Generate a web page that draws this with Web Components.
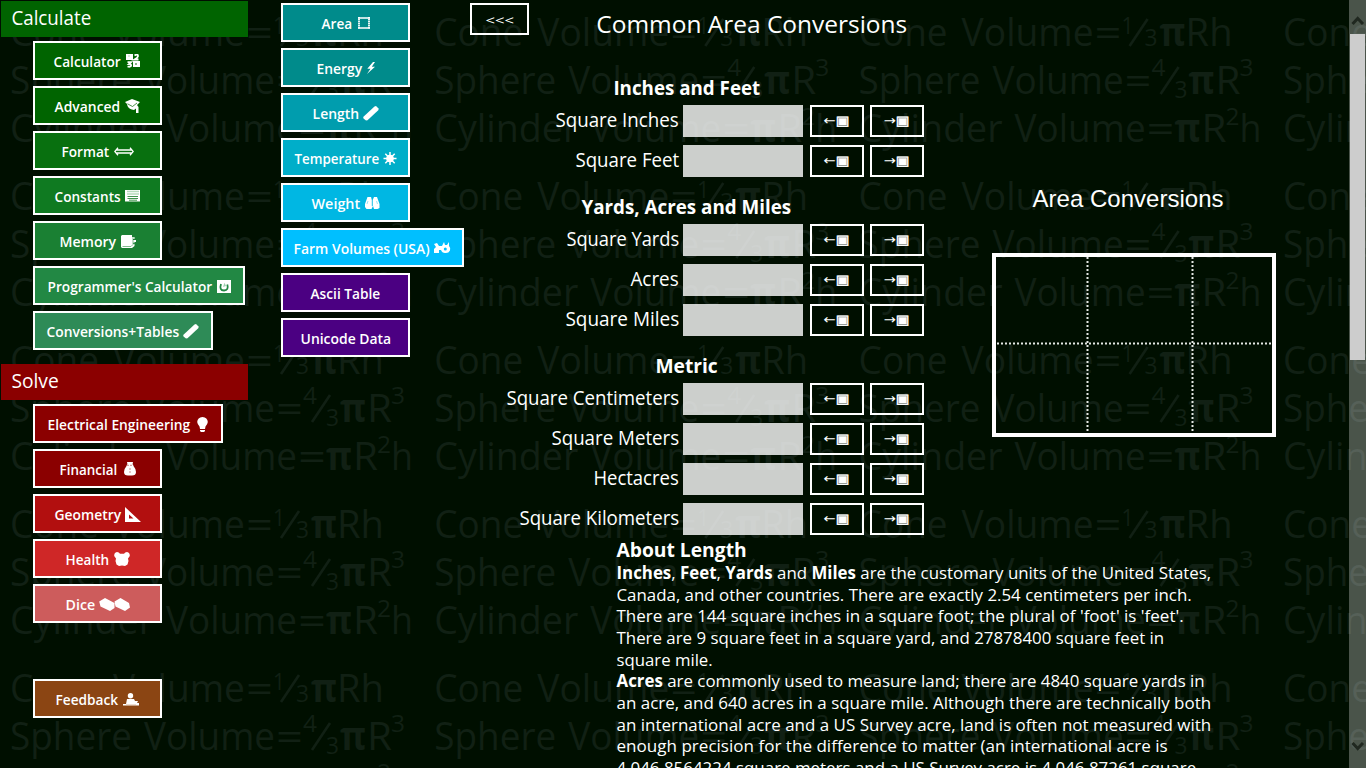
<!DOCTYPE html>
<html lang="en">
<head>
<meta charset="utf-8">
<title>Common Area Conversions</title>
<style>
  html, body { margin: 0; height: 100%; overflow: hidden; background: #000f00; }
  body { font-family: "Open Sans", "Noto Sans", sans-serif; color: #fff; }
</style>
</head>
<body>
<calc-app></calc-app>
<script>
const shadow = (el, html) => { const r = el.attachShadow({ mode: 'open' }); r.innerHTML = html; return r; };

/* One line of text set to an exact width. */
customElements.define('fit-text', class extends HTMLElement {
  connectedCallback() {
    if (this.shadowRoot) return;
    const r = shadow(this, `<style>
      :host{display:block;white-space:nowrap;flex:none}
      span{display:inline-block;transform-origin:0 50%;vertical-align:top}
    </style><span><slot></slot></span>`);
    const w = parseFloat(this.getAttribute('w'));
    this.style.width = w + 'px';
    const s = r.querySelector('span');
    const fs = parseFloat(getComputedStyle(this).fontSize);
    const n = s.offsetWidth ? s.getBoundingClientRect().width : 0;
    if (n) s.style.transform = `translateX(${-0.03 * fs}px) scaleX(${(w + 0.04 * fs) / n})`;
  }
});

/* Repeating formulas behind the page. */
customElements.define('formula-backdrop', class extends HTMLElement {
  connectedCallback() {
    const seg = (x, y, w, t, size = 39, bold = '') =>
      `<text x="${x}" y="${y}" font-size="${size}" ${bold ? 'font-weight="700"' : ''} textLength="${w}" lengthAdjust="spacingAndGlyphs">${t}</text>`;
    const slash = (x, y) => `<path d="M${x} ${y}L${x + 18} ${y - 27}" stroke="#112014" stroke-width="2.6"/>`;
    let out = '';
    for (let r = 0; r < 5; r++) for (let c = 0; c < 4; c++) {
      out += `<g transform="translate(${(c * 424.3).toFixed(1)} ${r * 164})">` +
        seg(10, 46, 89, 'Cone') + seg(113, 46, 132, 'Volume') + seg(246, 46, 27, '=') +
        seg(273, 34, 12, '1', 24) + slash(281, 46) + seg(296, 46, 13, '3', 24) + seg(311, 46, 26, 'π', 39, 1) + seg(337, 46, 47, 'Rh') +
        seg(10, 94, 122, 'Sphere') + seg(144, 94, 131, 'Volume') + seg(276, 94, 27, '=') +
        seg(303, 76, 14, '4', 24) + slash(312, 94) + seg(326, 98, 13, '3', 24) + seg(340, 94, 26, 'π', 39, 1) + seg(367, 94, 25, 'R') + seg(391, 76, 14, '3', 24) +
        seg(10, 142, 144, 'Cylinder') + seg(166, 142, 131, 'Volume') + seg(298, 142, 28, '=') + seg(326, 142, 26, 'π', 39, 1) + seg(353, 142, 25, 'R') + seg(377, 125, 14, '2', 24) + seg(391, 142, 22, 'h') + '</g>';
    }
    shadow(this, `<style>:host{position:absolute;inset:0;overflow:hidden}
      svg{display:block;font-family:"Open Sans","Noto Sans",sans-serif}</style>
      <svg width="1366" height="820" fill="#112014">${out}</svg>`);
  }
});

const ICONS = {
  numbers: [15, 14, '<path d="M0 0H7V6H0zM7 7H14V13H7z"/><path d="M8.500 1.500Q12-.5 12 2Q12 3.500 8.500 5.500H12.500M1.500 8.200H5L3 10Q5.500 10 5 12Q4 13.200 1.500 12.500" fill="none" stroke="#fff" stroke-width="1.800"/><path d="M9 10H11" stroke="#0b6b0b"/><path d="M2 2H4" stroke="#b8d8b8"/>'],
  cap: [15, 15, '<path d="M0 3L7 0L15 3L12 6L13.500 8V14H11V9.500L9 11Q4 10.500 2.500 7L2 5z"/><path d="M2.500 4.800L7.500 7.500L12 4" fill="none" stroke="#006400" stroke-width=".7"/>'],
  arrows: [20, 9, '<path d="M4 .8L.8 4.500L4 8.200M16 .8L19.200 4.500L16 8.200M2.500 3H17.500M2.500 6H17.500" fill="none" stroke="#fff" stroke-width="1.300"/>'],
  list: [15, 12, '<path d="M0 0H15V11.500H0z"/><path d="M2 1.500H14M2 4H14" stroke="#b5dcbc" stroke-width="1.500"/><path d="M2.500 6.500H13M2.500 8.500H13M4 10.200H12" stroke="#0f7a21" stroke-width=".8"/>'],
  book: [15, 13, '<path d="M1 0H11V2H13.500V5H15V7H13.500V11L11 13H1L0 12V1z"/><path d="M1.500 11.500H10L12 9.500V2" fill="none" stroke="#83bb90" stroke-width="1"/><path d="M12 4.500H14M12 8.300H14" stroke="#1a8033"/>'],
  cpu: [14, 13, '<path d="M0 0H14V13H0z"/><path d="M4 4Q2 10.300 7 10.500Q12 10.300 10.300 4.500" fill="none" stroke="#228844" stroke-width="1.800"/><path d="M6 7L7.500 2.800L9 6" fill="#9fd0b0"/>'],
  ruler: [16, 15, '<path d="M11.500 .5L13 0L15.500 2.500V4L4.500 14.200L3 14.500L.5 12.500L.2 11z"/>'],
  bulb: [11, 15, '<path d="M5.500 0Q10.500 .4 10.800 5Q10.500 7.500 8.500 9.500L8 12H3L2.500 9.500Q.5 7.500 .2 5Q.5 .4 5.500 0zM3 13H8V14L7 15H4L3 14z"/>'],
  bag: [12, 14, '<path d="M3 0H9L8.500 2.500H9L9.500 4Q12 7 12 10Q12 13.500 8 13.500H4Q0 13.500 0 10Q0 7 2.500 4L3 2.500H3.500z"/><path d="M3 3.300H9M6 6V11.500" stroke="#c98080" stroke-width=".9" stroke-dasharray="2 1"/>'],
  setsquare: [16, 15, '<path fill-rule="evenodd" d="M0 0L16 15H0zM4 7.500V11.500H8.500z"/>'],
  health: [16, 14, '<path d="M3 0Q5 0 6 1.800H10Q11 0 13 0Q16 .5 15.800 4L14 6.500L14.500 9L13.500 12.500L11 14L8 13.500L5 14L2.500 12.500L1.500 9L2 6.500L.2 4Q0 .5 3 0z"/>'],
  dice: [31, 13, '<path d="M6 0L15.500 5V10L11 13L1.500 8.500L.2 3.500zM21.500 0L30 5L31 9.500L26 13L16.500 8.500L15.500 3.500z"/>'],
  person: [16, 13, '<circle cx="7.500" cy="2.700" r="2.700"/><path d="M4 6H11L12 8H15L14 10H16V12.500H0V11H3z"/><path d="M3 12H13" stroke="#c9a080" stroke-width=".7"/>'],
  dotbox: [12, 12, '<path d="M0 11H12M0 1H12" stroke="#fff" stroke-width="1.600"/><path d="M1 0V12M11 0V12" stroke="#fff" stroke-width="1.800" stroke-dasharray="1.500 .5"/>'],
  bolt: [8, 12, '<path d="M6 0L.3 6.800H3.500L0 12L8 4.800H4.800L8 0z"/>'],
  sun: [14, 13, '<circle cx="7" cy="6.500" r="3.800"/><path d="M7 0V13M.5 6.500H13.500M2.300 1.800L11.700 11.200M11.700 1.800L2.300 11.200" stroke="#fff" stroke-width="1.500"/>'],
  weight: [15, 12, '<path d="M2.500 0H6L7 3Q8 3 9 0H12L14.500 7V11L12.500 12H9L8 9L6.500 12H1.500L0 10V7z"/><path d="M7.300 1V9" stroke="#00b7e3" stroke-width=".9"/><path d="M3 4L2 7M11.500 4L12.500 7" stroke="#80dbf2" stroke-width=".8"/>'],
  tractor: [17, 12, '<path d="M0 2L3 1L5 4H8L10 0L11 3H13L15 0V4Q17 6 16 8.500Q14.500 11.500 11 11Q8 11 7 8H5V11H0V7L2 5z"/><circle cx="11.300" cy="7" r="1.500" fill="#00bfff"/>'],
};

customElements.define('nav-button', class extends HTMLElement {
  connectedCallback() {
    const a = n => this.getAttribute(n), ic = ICONS[a('icon')];
    shadow(this, `<style>
      :host{display:flex;box-sizing:border-box;height:39px;width:${a('w') || 129}px;border:2px solid #fff;background:${a('color')};
        align-items:center;justify-content:center;gap:${a('gap') || 5}px;font-size:14.7px;font-weight:600;line-height:20px}
      fit-text{margin-top:1px} svg{display:block;flex:none;fill:#fff;margin-top:1px}
    </style><fit-text w="${a('tw')}">${a('label')}</fit-text>${ic ? `<svg width="${ic[0]}" height="${ic[1]}">${ic[2]}</svg>` : ''}`);
  }
});

customElements.define('menu-title', class extends HTMLElement {
  connectedCallback() {
    shadow(this, `<style>:host{display:block;box-sizing:border-box;width:247px;height:36px;margin-left:1px;padding:3px 0 0 10.5px;
      background:${this.getAttribute('color')};font-size:19.6px;line-height:28px}</style>
      <fit-text w="${this.getAttribute('tw')}"><slot></slot></fit-text>`);
  }
});

customElements.define('menu-stack', class extends HTMLElement {
  connectedCallback() {
    shadow(this, `<style>:host{display:flex;flex-direction:column;align-items:flex-start;gap:6px}</style><slot></slot>`);
  }
});

customElements.define('unit-button', class extends HTMLElement {
  connectedCallback() {
    shadow(this, `<style>:host{display:flex;box-sizing:border-box;width:54px;height:32px;border:2px solid #fff;align-items:center;justify-content:center;
      font:13px/18px "DejaVu Sans",sans-serif}
      b{font-weight:400;-webkit-text-stroke:.5px #fff}
      fit-text{margin:0}</style><fit-text w="25.500">${this.getAttribute('arrow')}<b>▣</b></fit-text>`);
  }
});

customElements.define('unit-row', class extends HTMLElement {
  connectedCallback() {
    shadow(this, `<style>
      :host{display:grid;grid-template-columns:208.500px 131.500px 60px 54px;height:32px;font-size:19.5px;line-height:28px}
      fit-text{justify-self:end;margin-top:1px}
      .field{width:120px;margin-left:4.500px;background:rgba(255,255,255,.8)}
    </style><fit-text w="${this.getAttribute('tw')}"><slot></slot></fit-text><div class="field"></div>
    <unit-button arrow="←"></unit-button><unit-button arrow="→"></unit-button>`);
  }
});

customElements.define('unit-group', class extends HTMLElement {
  connectedCallback() {
    const a = n => this.getAttribute(n);
    shadow(this, `<style>
      :host{display:flex;flex-direction:column;gap:8px;width:454px}
      header{height:47px;margin-bottom:-8px;box-sizing:border-box;padding:15px 0 0 ${a('x')}px;font-size:19.5px;font-weight:700;line-height:29px}
    </style><header><fit-text w="${a('tw')}">${a('title-text')}</fit-text></header><slot></slot>`);
  }
});

customElements.define('area-figure', class extends HTMLElement {
  connectedCallback() {
    shadow(this, `<style>:host{display:block}svg{display:block}text{font-family:"Liberation Sans",Arial,sans-serif;font-size:24px}</style>
    <svg width="300" height="260" viewBox="984 180 300 260" fill="none" stroke="#fff">
      <text x="1032.500" y="207" fill="#fff" stroke="none" textLength="191">Area Conversions</text>
      <rect x="994" y="255" width="280" height="180" stroke-width="4"/>
      <path d="M1087.500 257V433M1192.500 257V433M997 343.500H1272" stroke-width="2" stroke-dasharray="2 2" stroke="#e4e8e4"/>
    </svg>`);
  }
});

customElements.define('about-text', class extends HTMLElement {
  connectedCallback() {
    const L = [
      [594, '<b>Inches</b>, <b>Feet</b>, <b>Yards</b> and <b>Miles</b> are the customary units of the United States,'],
      [574.5, 'Canada, and other countries. There are exactly 2.54 centimeters per inch.'],
      [566.5, "There are 144 square inches in a square foot; the plural of 'foot' is 'feet'."],
      [547, 'There are 9 square feet in a square yard, and 27878400 square feet in'],
      [95.5, 'square mile.'],
      [587.5, '<b>Acres</b> are commonly used to measure land; there are 4840 square yards in'],
      [594, 'an acre, and 640 acres in a square mile. Although there are technically both'],
      [594, 'an international acre and a US Survey acre, land is often not measured with'],
      [550.5, 'enough precision for the difference to matter (an international acre is'],
      [579, '4,046.8564224 square meters and a US Survey acre is 4,046.87261 square']];
    shadow(this, `<style>:host{display:block;font-size:17px;line-height:21.650px}
      h2{margin:-1px 0 0;font-size:19.5px;line-height:26px;height:25px}
    </style><h2><fit-text w="129.500">About Length</fit-text></h2>${L.map(l => `<fit-text w="${l[0]}">${l[1]}</fit-text>`).join('')}`);
  }
});

customElements.define('scroll-rail', class extends HTMLElement {
  connectedCallback() {
    shadow(this, `<style>
      :host{position:absolute;top:0;right:0;bottom:0;width:17px;background:rgba(255,255,255,.29);display:flex;flex-direction:column}
      svg{display:block;fill:none;stroke:#202820;stroke-width:3}
      .up{height:34px;box-sizing:border-box;padding-top:15px}
      .thumb{height:326px;width:15px;margin-left:1px;background:#cdcdcd}
      .down{margin-top:auto;padding-bottom:16px}
    </style><div class="up"><svg width="17" height="12"><path d="M3.500 9L8.700 3.500L14 9"/></svg></div><div class="thumb"></div>
    <div class="down"><svg width="17" height="12"><path d="M3.500 3L8.700 8.500L14 3"/></svg></div>`);
  }
});

customElements.define('calc-app', class extends HTMLElement {
  connectedCallback() {
    const b = (label, tw, color, icon = '', w = 129, gap = 5) =>
      `<nav-button label="${label}" tw="${tw}" color="${color}" icon="${icon}" w="${w}" gap="${gap}"></nav-button>`;
    const u = (label, tw) => `<unit-row tw="${tw}">${label}</unit-row>`;
    shadow(this, `<style>
      :host{display:block;position:relative;width:1366px;height:768px;overflow:hidden}
      .page{position:relative;display:grid;grid-template-columns:281px 189px 1fr;height:768px}
      .side{padding-top:1px}
      .side menu-stack{padding:4px 0 14px 33px}
      .feedback{margin-top:50px}
      .tables{padding-top:3px}
      main{display:grid;grid-template-columns:514px 1fr;grid-template-rows:58px 480px auto;height:768px;overflow:hidden}
      .top{grid-column:1/3;display:flex;align-items:flex-start;padding-top:3px}
      .back{box-sizing:border-box;width:59px;height:32px;border:2px solid #fff;display:flex;justify-content:center;font-size:13.5px;font-weight:500;line-height:31px}
      h1{margin:4px 0 0 68px;font-size:24.500px;font-weight:400;line-height:33px}
      area-figure{padding-top:122px}
      about-text{grid-column:1/3;padding-left:147px}
    </style>
    <formula-backdrop></formula-backdrop>
    <div class="page">
      <nav class="side">
        <menu-title color="#006400" tw="79">Calculate</menu-title>
        <menu-stack>
          ${b('Calculator', 66.5, '#006400', 'numbers')}${b('Advanced', 65, '#006400', 'cap')}${b('Format', 47, '#08700f', 'arrows')}
          ${b('Constants', 65.5, '#0f7a21', 'list')}${b('Memory', 56, '#1a8033', 'book')}${b("Programmer's Calculator", 164, '#228844', 'cpu', 212)}
          ${b('Conversions+Tables', 132, '#2e8b57', 'ruler', 180, 4)}
        </menu-stack>
        <menu-title color="#8b0000" tw="46.5">Solve</menu-title>
        <menu-stack>
          ${b('Electrical Engineering', 142, '#8b0000', 'bulb', 190, 7)}${b('Financial', 57, '#8b0000', 'bag', 129, 7)}${b('Geometry', 66, '#b20f0f', 'setsquare', 129, 4)}
          ${b('Health', 43, '#cf2727', 'health')}${b('Dice', 29, '#cd5c5c', 'dice', 129, 4)}
          <div class="feedback">${b('Feedback', 62, '#8b4513', 'person')}</div>
        </menu-stack>
      </nav>
      <menu-stack class="tables">
        ${b('Area', 30, '#008b8b', 'dotbox', 129, 6)}${b('Energy', 45, '#008b8b', 'bolt')}${b('Length', 46, '#009dae', 'ruler', 129, 4)}
        ${b('Temperature', 84, '#00aec9', 'sun', 129, 4)}${b('Weight', 48, '#00b7e3', 'weight')}${b('Farm Volumes (USA)', 135.5, '#00bfff', 'tractor', 183, 4)}
        ${b('Ascii Table', 69, '#4b0082')}${b('Unicode Data', 90, '#4b0082')}
      </menu-stack>
      <main>
        <div class="top"><div class="back"><fit-text w="28">&lt;&lt;&lt;</fit-text></div><h1><fit-text w="310">Common Area Conversions</fit-text></h1></div>
        <section>
          <unit-group title-text="Inches and Feet" x="144" tw="146">${u('Square Inches', 122.5)}${u('Square Feet', 103)}</unit-group>
          <unit-group title-text="Yards, Acres and Miles" x="112" tw="209">${u('Square Yards', 112)}${u('Acres', 47.5)}${u('Square Miles', 113)}</unit-group>
          <unit-group title-text="Metric" x="186" tw="61.5">${u('Square Centimeters', 172)}${u('Square Meters', 127)}${u('Hectacres', 84.5)}${u('Square Kilometers', 159)}</unit-group>
        </section>
        <area-figure></area-figure>
        <about-text></about-text>
      </main>
    </div>
    <scroll-rail></scroll-rail>`);
  }
});
</script>
</body>
</html>
